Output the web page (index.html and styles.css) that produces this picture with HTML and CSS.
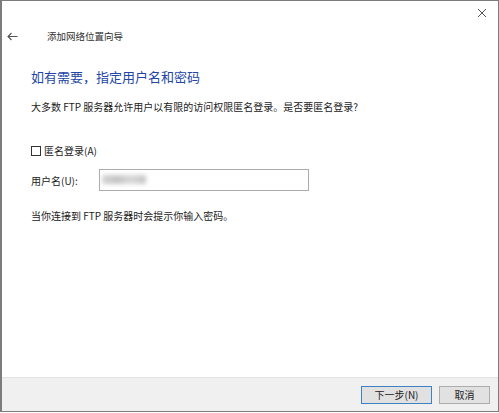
FILE: index.html
```html
<!DOCTYPE html>
<html lang="zh-CN">
<head>
    <meta charset="UTF-8">
    <meta name="viewport" content="width=device-width, initial-scale=1.0">
    <title>添加网络位置向导</title>
    <link rel="stylesheet" href="styles.css">
</head>
<body>
    <div class="window">
        <div class="topbar">
            <svg class="close" width="10" height="10" viewBox="0 0 10 10">
                <path d="M1 1 L9 9 M9 1 L1 9" stroke="#555" stroke-width="1" fill="none"/>
            </svg>
        </div>

        <div class="header">
            <svg class="back" width="11" height="9" viewBox="0 0 11 9">
                <path d="M10.5 4.5 H1 M4.5 1 L1 4.5 L4.5 8" stroke="#555" stroke-width="1.1" fill="none"/>
            </svg>
            <span class="wizard-title">添加网络位置向导</span>
        </div>

        <div class="content">
            <h1>如有需要，指定用户名和密码</h1>
            <p class="intro">大多数 FTP 服务器允许用户以有限的访问权限匿名登录。是否要匿名登录?</p>

            <label class="check-row">
                <span class="checkbox"></span>
                <span>匿名登录(A)</span>
            </label>

            <div class="user-row">
                <span class="user-label">用户名(U):</span>
                <div class="textbox">
                    <span class="blurred"></span>
                </div>
            </div>

            <p class="note">当你连接到 FTP 服务器时会提示你输入密码。</p>
        </div>

        <div class="footer">
            <button class="btn btn-default">下一步(N)</button>
            <button class="btn">取消</button>
        </div>
    </div>
</body>
</html>
```

FILE: styles.css
```css
body {
    margin: 0;
    background: #fff;
    font-family: "Microsoft YaHei", "Noto Sans CJK SC", "Noto Sans", sans-serif;
    color: #222;
}

.window {
    width: 499px;
    height: 412px;
    box-sizing: border-box;
    border: 1px solid #7c7c7c;
    border-left-width: 2px;
    background: #fff;
    display: flex;
    flex-direction: column;
}

.topbar {
    height: 24px;
    display: flex;
    justify-content: flex-end;
    align-items: center;
    padding-right: 11px;
}

.header {
    height: 22px;
    display: flex;
    align-items: center;
    padding-left: 5px;
}

.back {
    margin-right: 29px;
}

.wizard-title {
    font-size: 9.5px;
    color: #2e2e2e;
}

.content {
    padding: 0 29px;
}

h1 {
    margin: 21px 0 0;
    font-size: 13px;
    line-height: 18px;
    font-weight: normal;
    color: #2346a6;
}

.intro,
.note {
    margin: 14px 0 0;
    font-size: 10px;
    line-height: 14px;
}

.check-row {
    margin-top: 30px;
    display: flex;
    align-items: center;
    gap: 3px;
    font-size: 10px;
    line-height: 14px;
}

.checkbox {
    width: 8px;
    height: 8px;
    border: 1px solid #333;
    background: #fff;
}

.user-row {
    margin-top: 11px;
    display: flex;
    align-items: center;
    font-size: 10px;
}

.user-label {
    width: 68px;
}

.textbox {
    width: 210px;
    height: 22px;
    box-sizing: border-box;
    border: 1px solid #ababab;
    display: flex;
    align-items: center;
    padding: 0 0 1px 2px;
}

.blurred {
    width: 44px;
    height: 9px;
    background: linear-gradient(90deg, #d4d4d4, #c4c4c4 35%, #d8d8d8 65%, #c6c6c6);
    filter: blur(2px);
}

.note {
    margin-top: 18px;
}

.footer {
    margin-top: auto;
    height: 33px;
    background: #f0f0f0;
    border-top: 1px solid #e3e3e3;
    display: flex;
    justify-content: flex-end;
    align-items: center;
    gap: 7px;
    padding-right: 8px;
}

.btn {
    height: 18px;
    width: 51px;
    padding: 0;
    border: 1px solid #adadad;
    background: #e1e1e1;
    font-family: inherit;
    font-size: 10px;
    color: #222;
}

.btn-default {
    width: 71px;
    border-color: #3d83c4;
}
```
